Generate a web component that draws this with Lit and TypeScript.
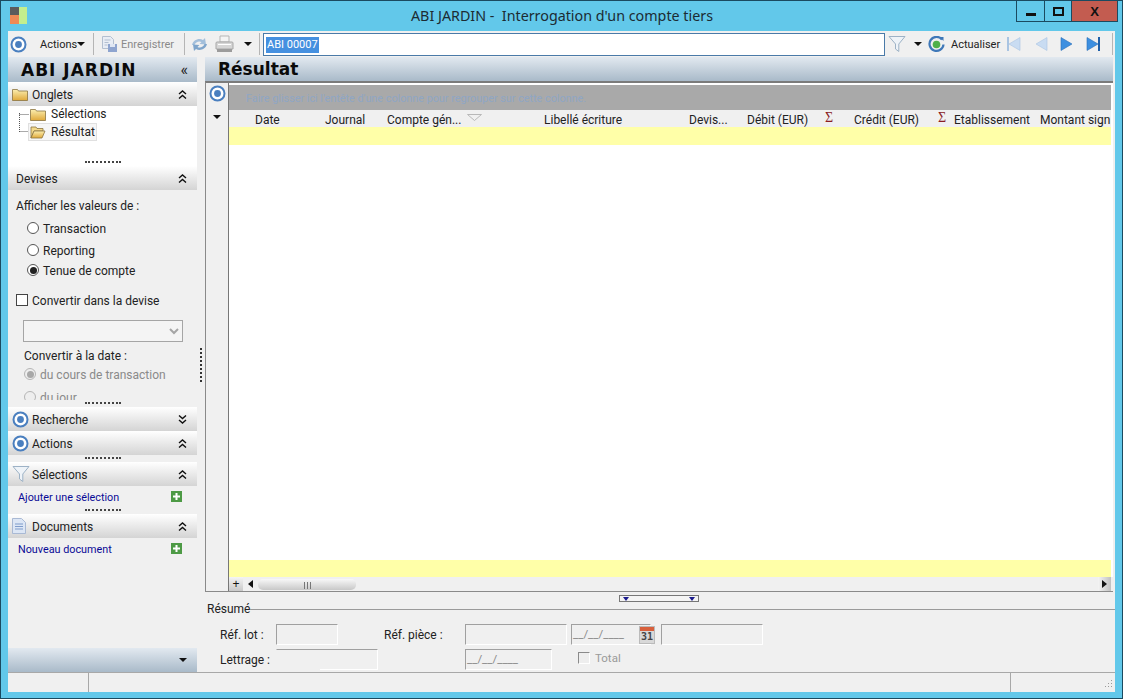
import { LitElement, css, html, svg } from "lit";
import { customElement } from "lit/decorators.js";

const target = html`<svg class="ico" width="17" height="17" viewBox="0 0 17 17">
  <circle cx="8.5" cy="8.5" r="7" fill="#fff" stroke="#4a7fbf" stroke-width="2"/>
  <circle cx="8.5" cy="8.5" r="3.4" fill="#4a7fbf"/>
</svg>`;

const funnel = html`<svg class="ico" width="18" height="18" viewBox="0 0 18 18">
  <path d="M1 1.5h16L10.8 9v7.5L7.5 14V9z" fill="#eef3f8" stroke="#9db2c6" stroke-width="1"/>
</svg>`;

const folder = (open = false) => html`<svg class="ico" width="16" height="14" viewBox="0 0 16 14">
  <defs><linearGradient id="fg" x1="0" y1="0" x2="0" y2="1"><stop offset="0" stop-color="#fbeeb0"/><stop offset="1" stop-color="#e0a93a"/></linearGradient></defs>
  ${open
    ? svg`<path d="M1 2h5l1 1.5h6V6H4L1 13z" fill="#f3d98a" stroke="#8a7440" stroke-width=".8"/><path d="M4 6h11l-3 7H1z" fill="url(#fg)" stroke="#8a7440" stroke-width=".8"/>`
    : svg`<path d="M.5 2.5h5l1 1.5h9v9.5H.5z" fill="url(#fg)" stroke="#8a7440" stroke-width=".8"/>`}
</svg>`;

const chevrons = (up: boolean) => html`<svg class="chev" width="9" height="9" viewBox="0 0 9 9">
  <path d="${up ? "M1 4l3.500-3 3.500 3M1 8.500l3.500-3 3.500 3" : "M1 .5l3.500 3 3.500-3M1 5l3.500 3 3.500-3"}" fill="none" stroke="#111" stroke-width="1.400"/>
</svg>`;

const caret = html`<span class="caret"></span>`;

const plus = html`<svg class="ico" width="11" height="11" viewBox="0 0 11 11">
  <rect width="11" height="11" fill="#4d9a45"/><path d="M5.500 2v7M2 5.500h7" stroke="#fff" stroke-width="2"/>
</svg>`;

const doc = html`<svg class="ico" width="14" height="16" viewBox="0 0 14 16">
  <path d="M.5.5h9l4 4v11H.5z" fill="#dce6f5" stroke="#a9b9d4"/>
  <path d="M3 6h8M3 8.500h8M3 11h8" stroke="#7f9ccb"/>
</svg>`;

const navIcon = (bar: "left" | "right" | "", dir: "l" | "r", pale: boolean) => {
  const fill = pale ? "#c9dcf2" : "#3d8fe0";
  const edge = pale ? "#a9c4e2" : "#2a6fb8";
  const tri = dir === "l" ? "M14 1.500v13L3 8z" : "M3 1.500v13L14 8z";
  return html`<svg class="ico" width="17" height="16" viewBox="0 0 17 16">
    <path d="${tri}" fill="${fill}" stroke="${edge}" stroke-width=".6"/>
    ${bar === "left" ? svg`<rect x="1" y="1" width="2" height="14" fill="${edge}"/>` : ""}
    ${bar === "right" ? svg`<rect x="14" y="1" width="2" height="14" fill="#1f5fa8"/>` : ""}
  </svg>`;
};

const columns: [string, string][] = [
  ["", ""],
  ["Date", ""],
  ["Journal", ""],
  ["Compte gén...", ""],
  ["", "sort"],
  ["Libellé écriture", ""],
  ["Devis...", ""],
  ["Débit (EUR)", ""],
  ["Σ", "sum"],
  ["Crédit (EUR)", ""],
  ["Σ", "sum"],
  ["Etablissement", ""],
  ["Montant sign", ""],
];

@customElement("app-root")
export class AppRoot extends LitElement {
  static styles = css`
    :host {
      display: block;
      width: 1123px;
      height: 699px;
      font: 12px Roboto, sans-serif;
      color: #222;
    }
    * { box-sizing: border-box; }
    .ico { display: block; flex: none; }

    .window {
      display: flex;
      flex-direction: column;
      height: 100%;
      background: #62c8ea;
      border: 1px solid #1b4a60;
      padding: 0 7px 6px 7px;
    }

    .titlebar {
      display: grid;
      grid-template-columns: 1fr auto 1fr;
      height: 30px;
      flex: none;
      margin: 0 -1px 0 0;
    }
    .logo { display: grid; grid-template-columns: 9px 8px; grid-template-rows: 8px 9px; margin: 6px 0 0 2px; width: 17px; }
    .logo i:nth-child(1) { background: #5c5c5c; }
    .logo i:nth-child(2) { background: #c4ee8e; grid-row: span 2; }
    .logo i:nth-child(3) { background: #ef8a55; }
    .title { font: 14.300px "Noto Sans", sans-serif; color: #1c2b33; line-height: 30px; white-space: pre; }
    .controls { display: flex; justify-self: end; height: 21px; margin-right: -2px; border: 1px solid #1b4a60; border-top: 0; }
    .controls span { display: flex; align-items: center; justify-content: center; border-left: 1px solid #1b4a60; }
    .controls span:first-child { border-left: 0; width: 27px; }
    .controls .max { width: 27px; }
    .controls .close { width: 46px; background: #c35c50; font: bold 13px "Liberation Sans", sans-serif; color: #111; }
    .min-glyph { width: 10px; height: 3px; background: #111; margin-top: 6px; }
    .max-glyph { width: 11px; height: 9px; border: 2px solid #111; }

    .toolbar {
      display: flex;
      align-items: center;
      height: 26px;
      flex: none;
      background: #f0f0f0;
      padding-left: 2px;
    }
    .sep { width: 1px; height: 22px; background: #b5b5b5; flex: none; }
    .caret { display: inline-block; width: 0; height: 0; border: 4px solid transparent; border-top: 4px solid #111; border-bottom: 0; flex: none; }
    .disabled { color: #8a8a8a; }
    .tool { flex: none; white-space: nowrap; font-size: 11px; padding-top: 1px; }
    .search {
      width: 622px;
      height: 23px;
      flex: none;
      background: #fff;
      border: 1px solid #4a7aa8;
      padding: 2px 2px;
      line-height: 17px;
      font-size: 11px;
    }
    .search b { font-weight: 400; background: #4590e0; color: #fff; display: inline-block; padding: 0 1px; line-height: 16px; }

    .body { display: flex; flex: 1; min-height: 0; }

    .left { width: 189px; flex: none; display: flex; flex-direction: column; background: #f0f0f0; }
    .paneHead {
      height: 25px;
      flex: none;
      display: flex;
      align-items: center;
      background: linear-gradient(#e2e9f0, #a9bac9);
    }
    .paneHead.company { padding: 0 9px 0 13px; justify-content: space-between; }
    .paneTitle { font: bold 17px "DejaVu Sans", sans-serif; color: #0a0a0a; }
    .company .paneTitle { letter-spacing: 1px; }
    .collapse { font-size: 16px; line-height: 1; }

    .secHead {
      height: 24px;
      flex: none;
      display: flex;
      align-items: center;
      padding: 0 10px 0 4px;
      background: linear-gradient(#fff, #d4d4d4);
    }
    .secHead .slot { width: 20px; flex: none; }
    .secHead .chev { margin-left: auto; }
    .secHead.plain { padding-left: 8px; }
    .t { padding-top: 2px; }

    .grip { height: 2px; width: 36px; margin: 0 auto; border-top: 2px dotted #444; flex: none; }
    .onglets { height: 60px; flex: none; background: #fff; width: 190px; display: flex; flex-direction: column; }
    .tree { display: flex; height: 55px; padding: 0 0 0 11px; flex: none; }
    .treeLines { flex: none; margin-top: 7px; }
    .treeItems { display: flex; flex-direction: column; margin-left: -1px; }
    .treeRow { display: flex; align-items: center; gap: 5px; height: 16px; padding-left: 1px; }
    .treeRow.sel { height: 18px; border: 1px solid #e0e0e0; background: #f6f6f6; width: 69px; padding-left: 1px; margin: 1px 0 0 -1px; }

    .devises { height: 217px; flex: none; display: flex; flex-direction: column; }
    .devClip { height: 210px; overflow: hidden; flex: none; padding-top: 5px; }
    .line { display: flex; align-items: center; height: 20px; white-space: nowrap; }
    .indent1 { padding-left: 8px; }
    .radio {
      width: 12px; height: 12px; border-radius: 50%; border: 1px solid #555; background: #fff; flex: none; margin-right: 4px;
      display: flex; align-items: center; justify-content: center;
    }
    .radio.on::after { content: ""; width: 7px; height: 7px; border-radius: 50%; background: #222; }
    .radio.dim { border-color: #b5b5b5; background: #eee; }
    .radio.dim.on::after { background: #a8a8a8; }
    .r1 { margin: 3px 0 0 19px; }
    .r2 { margin: 2px 0 0 19px; }
    .r3 { margin: 0 0 0 19px; }
    .checkLine { margin: 10px 0 0 8px; }
    .check { width: 12px; height: 12px; background: #fff; border: 1px solid #444; margin-right: 4px; flex: none; }
    .select {
      width: 160px; height: 22px; margin: 10px 0 0 15px; background: #f4f4f4; border: 1px solid #a5a5a5;
      display: flex; align-items: center; justify-content: flex-end; padding-right: 3px;
    }
    .dateLabel { margin: 3px 0 0 16px; }
    .r4 { margin: -1px 0 0 16px; }
    .r5 { margin: 3px 0 0 16px; }
    .gap7 { height: 7px; flex: none; padding-top: 2px; }
    .link { color: #0a0a96; display: flex; align-items: center; justify-content: space-between; height: 21px; padding: 0 15px 0 10px; font-size: 10.800px; }
    .fill { flex: 1; }

    .vsplit { width: 8px; flex: none; background: #f0f0f0; display: flex; align-items: center; padding-left: 3px; }
    .vsplit i { display: block; height: 34px; border-left: 2px dotted #333; }

    .main { flex: 1; min-width: 0; background: #f0f0f0; display: flex; flex-direction: column; }
    .main .paneHead { margin-right: 2px; padding-left: 13px; height: 24px; }
    .gridBox {
      height: 511px; flex: none; margin-right: 2px; background: #fff; border: 1px solid #8a8a8a; border-width: 1px 0 1px 1px; border-top: 2px solid #7b7b7b;
      display: flex;
    }
    .gutter { width: 23px; flex: none; background: #f0f0f0; border-right: 1px solid #777; display: flex; flex-direction: column; align-items: center; padding-top: 2px; }
    .gutter .caret { margin-top: 13px; }
    .grid { flex: 1; min-width: 0; display: flex; flex-direction: column; padding: 2px 2px 0 0; }
    .band { height: 25px; flex: none; background: #a9a9a9; color: #8fa6c4; padding-left: 17px; line-height: 28px; font-size: 10.800px; white-space: nowrap; overflow: hidden; }
    .header {
      height: 17px; flex: none; background: #f0f0f0; display: grid; overflow: hidden; white-space: nowrap; line-height: 20px;
      grid-template-columns: 26px 70px 62px 80px 77px 145px 58px 78px 29px 84px 16px 86px 71px;
    }
    .header .sum { color: #8a1c24; font: 14px "Liberation Serif", serif; line-height: 15px; }
    .header .sort svg { margin-top: 4px; }
    .yellow { height: 18px; flex: none; background: #ffffa8; }
    .rows { flex: 1; }
    .hscroll { height: 14px; flex: none; background: #f0f0f0; display: flex; align-items: stretch; margin-right: -2px; padding-right: 2px; }
    .plusBtn { width: 14px; height: 14px; background: linear-gradient(#f4f4f4, #c9c9c9); font: 12px "Liberation Sans", sans-serif; line-height: 14px; text-align: center; color: #111; flex: none; }
    .arrowL { width: 0; height: 0; border: 4px solid transparent; border-right: 5px solid #111; border-left: 0; align-self: center; margin: 0 5px; flex: none; }
    .thumb { width: 98px; height: 11px; margin-top: 2px; border-radius: 5px; background: linear-gradient(#f8f8f8, #c8c8c8); flex: none; display: flex; justify-content: center; gap: 2px; padding: 3px 0 1px 0; }
    .thumb i { width: 1px; background: #777; }
    .arrowBox { margin-left: auto; width: 13px; background: linear-gradient(90deg, #f4f4f4, #c0c0c0); display: flex; align-items: center; justify-content: center; }
    .arrowR { width: 0; height: 0; border: 4px solid transparent; border-left: 5px solid #111; border-right: 0; }

    .hsplit { height: 17px; flex: none; display: flex; justify-content: center; padding: 3px 0 0 0; margin-right: 2px; }
    .hsplitBtn { width: 80px; height: 7px; border: 1px solid #777; display: flex; justify-content: space-between; padding: 1px 3px; background: #f4f4f4; }
    .hsplitBtn i { width: 0; height: 0; border: 3px solid transparent; border-top: 4px solid #1a1a8c; border-bottom: 0; }

    .resume { flex: 1; display: flex; flex-direction: column; }
    .legend { display: flex; align-items: center; height: 0; padding-left: 2px; margin-bottom: 15px; }
    .legend::after { content: ""; flex: 1; height: 1px; background: #9a9a9a; }
    .form { display: grid; grid-template-columns: 71px 62px 46px 81px 102px 4px 80px 10px 102px; row-gap: 4px; grid-template-rows: 21px 21px; align-items: stretch; }
    .form .lbl { padding-left: 15px; line-height: 23px; white-space: nowrap; }
    .form .lbl2 { line-height: 23px; white-space: nowrap; }
    .field { border: 1px solid; border-color: #a0a0a0 #fff #fff #a0a0a0; color: #8a8a8a; padding-left: 1px; line-height: 21px; display: flex; align-items: center; justify-content: space-between; font-size: 11.500px; }
    .field.open { border-left-color: transparent; border-bottom-color: transparent; position: relative; }
    .lettrage { grid-column: 2 / span 2; margin-right: 6px; }
    .lettrage::after { content: ""; position: absolute; left: 43px; right: -1px; bottom: -1px; height: 1px; background: #fff; }
    .dateB { grid-column: 5; margin-right: 15px; }
    .total { grid-column: 7 / span 3; display: flex; align-items: center; gap: 5px; color: #9a9a9a; margin: 0 0 3px 7px; font-size: 11.500px; }
    .totalBox { width: 12px; height: 12px; border: 1px solid; border-color: #8a8a8a #fff #fff #8a8a8a; background: #eee; }
    .cal { width: 16px; height: 18px; margin-right: -5px; background: #d8d8d8; border: 1px solid #bbb; display: flex; flex-direction: column; font: bold 10px "DejaVu Sans Mono", monospace; color: #444; text-align: center; line-height: 10px; }
    .cal i { height: 4px; background: #d8603c; display: block; margin-bottom: 1px; }

    .status { height: 20px; flex: none; display: flex; background: #f0f0f0; border-top: 1px solid #a8a8a8; }
    .status span { border-right: 1px solid #a8a8a8; }
    .status .a { width: 81px; }
    .status .b { width: 922px; }
    .status .c { flex: 1; border-right: 0; display: flex; align-items: flex-end; justify-content: flex-end; padding: 0 2px 2px 0; }
  `;

  section(icon: unknown, label: string, up = true, plain = false) {
    return html`<div class="secHead ${plain ? "plain" : ""}">
      ${plain ? "" : html`<span class="slot">${icon}</span>`}<span class="t">${label}</span>${chevrons(up)}
    </div>`;
  }

  renderToolbar() {
    return html`<div class="toolbar">
      ${target}
      <span style="width:13px"></span>
      <span class="tool" style="width:37px">Actions</span>${caret}
      <span style="width:8px"></span><span class="sep"></span>
      <span style="width:7px"></span>
      <svg class="ico" width="17" height="16" viewBox="0 0 17 16">
        <path d="M1.500.5h8l3 3v9h-11z" fill="#e8edf5" stroke="#b3bfd0"/>
        <path d="M3.500 4h6M3.500 6.500h4M3.500 9h3" stroke="#b3bfd0"/>
        <rect x="7" y="8" width="9" height="8" fill="#8ea4cf"/><rect x="9" y="8" width="5" height="3" fill="#dfe6f3"/>
      </svg>
      <span style="width:3px"></span><span class="tool disabled" style="width:63px">Enregistrer</span>
      <span class="sep"></span>
      <span style="width:6px"></span>
      <svg class="ico" width="17" height="17" viewBox="0 0 17 17">
        <path d="M1 9C2 4 8 1.500 12 4l2-2 1 6.500-6.500-.5 2-2C8 4.500 4.500 6 3.500 9z" fill="#a3bfdb"/>
        <path d="M16 8c-1 5-7 7.500-11 5l-2 2-1-6.500 6.500.5-2 2c2.500 1.500 6 0 7-3z" fill="#7fa5cb"/>
      </svg>
      <span style="width:7px"></span>
      <svg class="ico" width="19" height="19" viewBox="0 0 19 19">
        <path d="M5 1h9v6H5z" fill="#f4f4f4" stroke="#b5b5b5"/>
        <path d="M2 7h15a1 1 0 0 1 1 1v6H1V8a1 1 0 0 1 1-1z" fill="#d6d6d6" stroke="#a8a8a8"/>
        <path d="M2 14h15v3H2z" fill="#9c9c9c"/><path d="M3 9.500h13" stroke="#fff"/>
      </svg>
      <span style="width:10px"></span>${caret}
      <span style="width:7px"></span><span class="sep"></span>
      <span style="width:3px"></span>
      <div class="search"><b>ABI 00007</b></div>
      <span style="width:3px"></span>${funnel}
      <span style="width:8px"></span>${caret}
      <span style="width:6px"></span>
      <svg class="ico" width="17" height="17" viewBox="0 0 17 17">
        <path d="M14 3.500A7 7 0 1 0 15.500 8.500" fill="none" stroke="#3f78b8" stroke-width="2.200"/>
        <path d="M11.500 1h4v4z" fill="#3f78b8"/>
        <circle cx="8.500" cy="8.500" r="3.800" fill="#4fb04a"/>
      </svg>
      <span style="width:6px"></span><span class="tool" style="width:47px">Actualiser</span>
      <span style="width:8px"></span>${navIcon("left", "l", true)}
      <span style="width:10px"></span>${navIcon("", "l", true)}
      <span style="width:8px"></span>${navIcon("", "r", false)}
      <span style="width:9px"></span>${navIcon("right", "r", false)}
      <span style="width:11px"></span><span class="sep"></span>
    </div>`;
  }

  renderLeft() {
    const gripLow = html`<div class="gap7"><div class="grip"></div></div>`;
    return html`<div class="left">
      <div class="paneHead company"><span class="paneTitle">ABI JARDIN</span><span class="collapse">«</span></div>
      ${this.section(folder(), "Onglets")}
      <div class="onglets">
        <div class="tree">
          <svg class="treeLines" width="11" height="20" viewBox="0 0 11 20">
            <path d="M.5 0v19M.5 1.500h10M.5 18.500h10" fill="none" stroke="#555" stroke-dasharray="1 1"/>
          </svg>
          <div class="treeItems">
            <div class="treeRow">${folder()}<span>Sélections</span></div>
            <div class="treeRow sel">${folder(true)}<span>Résultat</span></div>
          </div>
        </div>
        <div class="grip"></div>
      </div>
      ${this.section("", "Devises", true, true)}
      <div class="devises">
        <div class="devClip">
          <div class="line indent1"><span class="t">Afficher les valeurs de :</span></div>
          <div class="line r1"><span class="radio"></span><span class="t">Transaction</span></div>
          <div class="line r2"><span class="radio"></span><span class="t">Reporting</span></div>
          <div class="line r3"><span class="radio on"></span><span class="t">Tenue de compte</span></div>
          <div class="line checkLine"><span class="check"></span><span class="t">Convertir dans la devise</span></div>
          <div class="select">
            <svg width="10" height="7" viewBox="0 0 10 7"><path d="M1 1l4 4 4-4" fill="none" stroke="#a5a5a5" stroke-width="2"/></svg>
          </div>
          <div class="line dateLabel"><span class="t">Convertir à la date :</span></div>
          <div class="line r4 disabled"><span class="radio dim on"></span><span class="t">du cours de transaction</span></div>
          <div class="line r5 disabled"><span class="radio dim"></span><span class="t">du jour</span></div>
        </div>
        ${gripLow}
      </div>
      ${this.section(target, "Recherche", false)}
      ${this.section(target, "Actions")}
      ${gripLow}
      ${this.section(funnel, "Sélections")}
      <div class="link"><span class="t">Ajouter une sélection</span> ${plus}</div>
      ${gripLow}
      ${this.section(doc, "Documents")}
      <div class="link"><span class="t">Nouveau document</span> ${plus}</div>
      <div class="fill"></div>
      <div class="paneHead" style="justify-content:flex-end;padding-right:10px;height:24px">${caret}</div>
    </div>`;
  }

  renderGrid() {
    return html`<div class="gridBox">
      <div class="gutter">
        ${target}
        ${caret}
      </div>
      <div class="grid">
        <div class="band">Faire glisser ici l'entête d'une colonne pour regrouper sur cette colonne.</div>
        <div class="header">
          ${columns.map(([label, kind]) => kind === "sort"
            ? html`<span class="sort"><svg class="ico" width="15" height="7" viewBox="0 0 15 7"><path d="M.5.5h14L7.500 6.500z" fill="none" stroke="#b8b8b8"/></svg></span>`
            : html`<span class="${kind}">${label}</span>`)}
        </div>
        <div class="yellow"></div>
        <div class="rows"></div>
        <div class="yellow" style="height:17px"></div>
        <div class="hscroll">
          <div class="plusBtn">+</div>
          <span class="arrowL"></span>
          <div class="thumb"><i></i><i></i><i></i></div>
          <div class="arrowBox"><span class="arrowR"></span></div>
        </div>
      </div>
    </div>`;
  }

  renderResume() {
    return html`<div class="resume">
      <div class="legend"><span>Résumé</span></div>
      <div class="form">
        <span class="lbl">Réf. lot :</span>
        <div class="field"></div>
        <span></span>
        <span class="lbl2">Réf. pièce :</span>
        <div class="field"></div>
        <span></span>
        <div class="field">__/__/____<div class="cal"><i></i>31</div></div>
        <span></span>
        <div class="field"></div>
        <span class="lbl">Lettrage :</span>
        <div class="field open lettrage"></div>
        <span></span>
        <div class="field dateB">__/__/____</div>
        <span></span>
        <div class="total"><span class="totalBox"></span>Total</div>
      </div>
    </div>`;
  }

  render() {
    return html`<div class="window">
      <div class="titlebar">
        <div class="logo"><i></i><i></i><i></i></div>
        <div class="title">ABI JARDIN -  Interrogation d'un compte tiers</div>
        <div class="controls">
          <span><i class="min-glyph"></i></span>
          <span class="max"><i class="max-glyph"></i></span>
          <span class="close">X</span>
        </div>
      </div>
      ${this.renderToolbar()}
      <div class="body">
        ${this.renderLeft()}
        <div class="vsplit"><i></i></div>
        <div class="main">
          <div class="paneHead"><span class="paneTitle">Résultat</span></div>
          ${this.renderGrid()}
          <div class="hsplit"><div class="hsplitBtn"><i></i><i></i></div></div>
          ${this.renderResume()}
        </div>
      </div>
      <div class="status">
        <span class="a"></span><span class="b"></span>
        <span class="c">
          <svg width="11" height="11" viewBox="0 0 11 11"><path d="M9 1h1v1H9zM6 4h1v1H6zM9 4h1v1H9zM3 7h1v1H3zM6 7h1v1H6zM9 7h1v1H9z" fill="#9a9a9a"/></svg>
        </span>
      </div>
    </div>`;
  }
}
